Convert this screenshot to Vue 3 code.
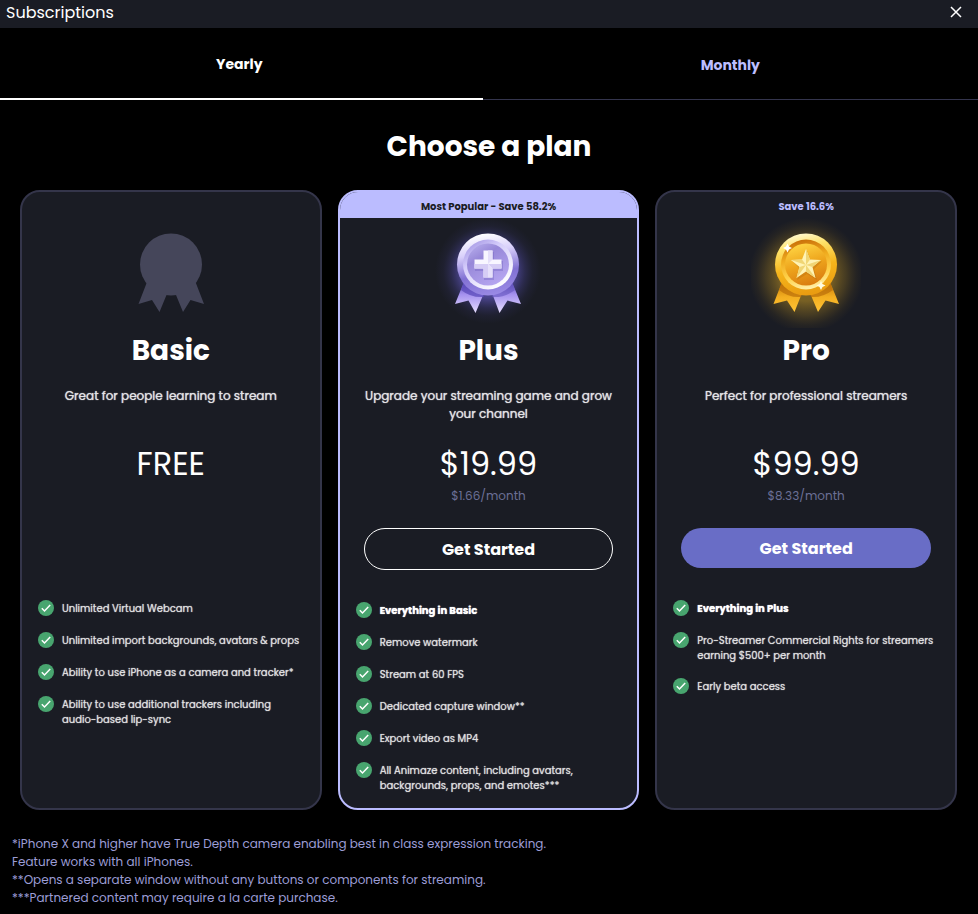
<script setup>
import { ref } from "vue";

const billing = ref("yearly");
const tabs = [
  { id: "yearly", label: "Yearly" },
  { id: "monthly", label: "Monthly" }
];

const plans = [
  {
    id: "basic",
    name: "Basic",
    banner: "",
    text: "Great for people learning to stream",
    price: "FREE",
    monthly: "",
    features: [
      { text: "Unlimited Virtual Webcam" },
      { text: "Unlimited import backgrounds, avatars & props" },
      { text: "Ability to use iPhone as a camera and tracker*" },
      { text: "Ability to use additional trackers including audio-based lip-sync" }
    ]
  },
  {
    id: "plus",
    name: "Plus",
    banner: "Most Popular - Save 58.2%",
    text: "Upgrade your streaming game and grow your channel",
    price: "$19.99",
    monthly: "$1.66/month",
    features: [
      { text: "Everything in Basic", strong: true },
      { text: "Remove watermark" },
      { text: "Stream at 60 FPS" },
      { text: "Dedicated capture window**" },
      { text: "Export video as MP4" },
      { text: "All Animaze content, including avatars, backgrounds, props, and emotes***" }
    ]
  },
  {
    id: "pro",
    name: "Pro",
    banner: "Save 16.6%",
    text: "Perfect for professional streamers",
    price: "$99.99",
    monthly: "$8.33/month",
    features: [
      { text: "Everything in Plus", strong: true },
      { text: "Pro-Streamer Commercial Rights for streamers earning $500+ per month" },
      { text: "Early beta access" }
    ]
  }
];

const notes = [
  "*iPhone X and higher have True Depth camera enabling best in class expression tracking.",
  "Feature works with all iPhones.",
  "**Opens a separate window without any buttons or components for streaming.",
  "***Partnered content may require a la carte purchase."
];
</script>

<template>
  <div class="page">
    <header class="titlebar">
      <span>Subscriptions</span>
      <button class="close" type="button" aria-label="Close">
        <svg width="12" height="12" viewBox="0 0 12 12" aria-hidden="true">
          <path d="M1 1L11 11M11 1L1 11" stroke="#fff" stroke-width="1.5" />
        </svg>
      </button>
    </header>

    <nav class="tabs" role="tablist">
      <button
        v-for="t in tabs"
        :key="t.id"
        type="button"
        role="tab"
        class="tab"
        :class="{ active: billing === t.id }"
        :aria-selected="billing === t.id"
        @click="billing = t.id"
      >{{ t.label }}</button>
    </nav>

    <main>
      <h1 class="heading">Choose a plan</h1>

      <div class="plans">
        <section v-for="p in plans" :key="p.id" class="card" :class="p.id">
          <div class="banner">{{ p.banner }}</div>

          <!-- Medals -->
          <svg v-if="p.id === 'basic'" class="medal" viewBox="0 0 110 110" aria-hidden="true">
            <g fill="#45465a">
              <circle cx="55" cy="46.500" r="31" />
              <path d="M31 64L22.5 86L36 82L43.5 94L50.5 77H60L67 94L74.500 82L88 86L79.500 64Z" />
            </g>
          </svg>

          <svg v-else-if="p.id === 'plus'" class="medal" viewBox="0 0 110 110" aria-hidden="true">
            <defs>
              <radialGradient id="plus-glow" cx="0.5" cy="0.48" r="0.48">
                <stop offset="0.5" stop-color="#6a5fd0" stop-opacity="0.62" />
                <stop offset="0.7" stop-color="#5850b8" stop-opacity="0.28" />
                <stop offset="0.85" stop-color="#4a459a" stop-opacity="0.1" />
                <stop offset="1" stop-color="#4a459a" stop-opacity="0" />
              </radialGradient>
              <linearGradient id="plus-rim" x1="0.4" y1="0" x2="0.6" y2="1">
                <stop offset="0" stop-color="#fff" />
                <stop offset="0.3" stop-color="#d9d0fb" />
                <stop offset="0.65" stop-color="#8171d3" />
                <stop offset="1" stop-color="#9b8be6" />
              </linearGradient>
              <linearGradient id="plus-ring" x1="0" y1="0" x2="0.7" y2="1">
                <stop offset="0" stop-color="#9889df" />
                <stop offset="0.4" stop-color="#d4ccfa" />
                <stop offset="1" stop-color="#fff" />
              </linearGradient>
              <linearGradient id="plus-face" x1="0.2" y1="0" x2="0.8" y2="1">
                <stop offset="0" stop-color="#b5abeb" />
                <stop offset="0.3" stop-color="#9788d8" />
                <stop offset="1" stop-color="#b8a8f3" />
              </linearGradient>
              <linearGradient id="plus-ribbon" x1="0" y1="0" x2="0" y2="1">
                <stop offset="0" stop-color="#594bb9" />
                <stop offset="0.4" stop-color="#a591ef" />
                <stop offset="1" stop-color="#e7dfff" />
              </linearGradient>
            </defs>
            <rect width="110" height="110" fill="url(#plus-glow)" />
            <path d="M31 64L22 86L35.500 82.500L42.500 95L51 75Z" fill="url(#plus-ribbon)" />
            <path d="M79 64L88 86L74.500 82.500L66.500 95L59 75Z" fill="url(#plus-ribbon)" />
            <path d="M31 64L28 72Q38 80 51 79L52 74Z" fill="#5546b6" opacity="0.7" />
            <path d="M79 64L82 72Q71 80 59 79L58 74Z" fill="#6253bc" opacity="0.6" />
            <circle cx="55" cy="46.500" r="31" fill="url(#plus-rim)" />
            <circle cx="55" cy="46.500" r="25" fill="url(#plus-ring)" />
            <circle cx="55" cy="46.500" r="21" fill="url(#plus-face)" />
            <path d="M51 34h10v9h9v10h-9v9H51v-9h-9V43h9z" fill="#6b5cba" opacity="0.35" />
            <path d="M50.500 32.500h9v9h9v9h-9v9h-9v-9h-9v-9h9z" fill="#f8f6ff" />
            <path d="M41.500 50.500V46H55V59.500H50.500V50.500zM59.500 50.500H68.500V46H55z" fill="#d6cdf5" />
            <path d="M55 46L59.500 50.500V59.500H55zM55 32.500H59.500V41.500L55 46z" fill="#e6e0fa" />
          </svg>

          <svg v-else class="medal" viewBox="0 0 110 110" aria-hidden="true">
            <defs>
              <radialGradient id="pro-glow" cx="0.5" cy="0.52" r="0.52">
                <stop offset="0.45" stop-color="#a07d24" stop-opacity="0.7" />
                <stop offset="0.7" stop-color="#806520" stop-opacity="0.42" />
                <stop offset="0.88" stop-color="#6b541c" stop-opacity="0.14" />
                <stop offset="1" stop-color="#6b541c" stop-opacity="0" />
              </radialGradient>
              <linearGradient id="pro-rim" x1="0.4" y1="0" x2="0.6" y2="1">
                <stop offset="0" stop-color="#fff8ce" />
                <stop offset="0.2" stop-color="#ffe36b" />
                <stop offset="0.55" stop-color="#f5b51b" />
                <stop offset="1" stop-color="#e99a10" />
              </linearGradient>
              <linearGradient id="pro-ring" x1="0.4" y1="0" x2="0.6" y2="1">
                <stop offset="0" stop-color="#c96f09" />
                <stop offset="0.35" stop-color="#efab1e" />
                <stop offset="0.7" stop-color="#ffd34c" />
                <stop offset="1" stop-color="#fff0ae" />
              </linearGradient>
              <linearGradient id="pro-face" x1="0.3" y1="0" x2="0.6" y2="1">
                <stop offset="0" stop-color="#ffd544" />
                <stop offset="0.5" stop-color="#eea51c" />
                <stop offset="1" stop-color="#d97c10" />
              </linearGradient>
              <linearGradient id="pro-ribbon" x1="0" y1="0" x2="0" y2="1">
                <stop offset="0" stop-color="#c47808" />
                <stop offset="0.5" stop-color="#f3ae20" />
                <stop offset="1" stop-color="#ffc436" />
              </linearGradient>
            </defs>
            <rect width="110" height="110" fill="url(#pro-glow)" />
            <path d="M31 64L22.500 86L36 82.500L43.500 94L51 75Z" fill="url(#pro-ribbon)" />
            <path d="M79 64L88 86L74.500 82.500L67 94L59 75Z" fill="url(#pro-ribbon)" />
            <path d="M31 64L28 72Q38 80 50 79L52 74Z" fill="#b76a08" opacity="0.65" />
            <path d="M79 64L82 72Q71 80 60 79L58 74Z" fill="#b76a08" opacity="0.65" />
            <circle cx="55" cy="46.500" r="31" fill="url(#pro-rim)" />
            <circle cx="55" cy="46.500" r="25" fill="url(#pro-ring)" />
            <circle cx="55" cy="46.500" r="21" fill="url(#pro-face)" />
            <path d="M56 33L60 43L71 43.500L63 51L66 62L56 56L46 62L49 51L42 43.500L52 43Z" fill="#b96d10" opacity="0.4" />
            <path d="M55 31L59 41.500L70 42L61.500 49L64.500 60L55 53.500L45.500 60L48.500 49L40 42L51 41.500Z" fill="#fff3b4" />
            <path d="M55 47L55 31L59 41.500ZM55 47L70 42L61.500 49ZM55 47L64.500 60L55 53.500ZM55 47L45.500 60L48.500 49ZM55 47L40 42L51 41.500Z" fill="#f0d574" />
            <path d="M36.500 25.500L38 28.500L41 30L38 31.500L36.500 34.500L35 31.500L32 30L35 28.500Z" fill="#fff" />
            <path d="M70 63L71.500 66L74.500 67.500L71.500 69L70 72L68.500 69L65.500 67.500L68.500 66Z" fill="#fffbe0" />
          </svg>

          <h2 class="name">{{ p.name }}</h2>
          <p class="text">{{ p.text }}</p>
          <div class="price">{{ p.price }}</div>
          <div class="per-month">{{ p.monthly }}</div>
          <div class="action">
            <button v-if="p.id !== 'basic'" class="start" type="button">Get Started</button>
          </div>

          <ul class="features">
            <li v-for="f in p.features" :key="f.text" :class="{ strong: f.strong }">
              <svg class="check" width="16" height="16" viewBox="0 0 16 16" aria-hidden="true">
                <circle cx="8" cy="8" r="8" fill="#48a56f" />
                <path d="M3.800 8.300L6.500 11L12.200 5" fill="none" stroke="#fff" stroke-width="1.5" />
              </svg>
              <span>{{ f.text }}</span>
            </li>
          </ul>
        </section>
      </div>

      <footer class="notes">
        <p v-for="n in notes" :key="n">{{ n }}</p>
      </footer>
    </main>
  </div>
</template>

<style>
body {
  margin: 0;
  background: #000;
}
</style>

<style scoped>
.page {
  font-family: Poppins, Inter, "Open Sans", sans-serif;
  color: #fff;
  min-height: 100vh;
  background: #000;
}
button {
  font-family: inherit;
  cursor: pointer;
}

/* Title bar */
.titlebar {
  display: flex;
  align-items: flex-start;
  justify-content: space-between;
  height: 28px;
  padding: 0 16px 0 6px;
  background: #1a1c24;
  font-size: 16px;
  line-height: 26px;
}
.close {
  display: flex;
  margin-top: 6px;
  padding: 0;
  border: 0;
  background: none;
}

/* Tabs */
.tabs {
  display: flex;
}
.tab {
  flex: 1 1 auto;
  height: 72px;
  padding: 4px 2px 0;
  border: 0;
  border-bottom: 1px solid #34354d;
  background: none;
  color: #bcbdff;
  font-size: 14px;
  font-weight: 700;
}
.tab.active {
  padding: 2px 4px 0 0;
  border-bottom: 2px solid #fff;
  color: #fff;
}

.heading {
  margin: 27px 0 23px;
  font-size: 28px;
  line-height: 40px;
  font-weight: 700;
  text-align: center;
}

/* Plan cards */
.plans {
  display: grid;
  grid-template-columns: repeat(3, 1fr);
  gap: 16px;
  padding: 0 21px 0 20px;
}
.card {
  display: flex;
  flex-direction: column;
  align-items: center;
  border: 2px solid #34354a;
  border-radius: 20px;
  background: #1a1c24;
  padding-bottom: 16px;
  overflow: hidden;
}
.card.plus { border-color: #bbbcff; }

.banner {
  align-self: stretch;
  height: 26px;
  color: #bbbcff;
  font-size: 10px;
  font-weight: 700;
  line-height: 30px;
  text-align: center;
}
.plus .banner {
  background: #bbbcff;
  color: #1a1c24;
}

.medal {
  width: 110px;
  height: 110px;
}

.name {
  margin: 0;
  font-size: 28px;
  line-height: 46px;
  font-weight: 700;
}
.text {
  box-sizing: border-box;
  min-height: 36px;
  margin: 13px 0 0;
  padding: 0 20px;
  color: #e3e3e6;
  font-size: 12px;
  font-weight: 400;
  line-height: 18px;
  text-align: center;
  text-shadow: 0 0 1px currentColor;
}
.price {
  margin-top: 17px;
  font-size: 32px;
  line-height: 48px;
}
.per-month {
  height: 16px;
  color: #6b6f96;
  font-size: 12px;
  line-height: 16px;
}
.action {
  box-sizing: border-box;
  align-self: stretch;
  min-height: 40px;
  margin-top: 24px;
  padding: 0 24px;
}
.start {
  display: block;
  width: 100%;
  height: 40px;
  border: 0;
  border-radius: 21px;
  background: #696dc6;
  color: #fff;
  font-size: 16px;
  font-weight: 700;
}
.plus .start {
  height: 42px;
  border: 1px solid #fff;
  background: none;
}

.features {
  box-sizing: border-box;
  align-self: stretch;
  display: flex;
  flex-direction: column;
  gap: 16px;
  margin: 32px 0 0;
  padding: 0 16px;
  list-style: none;
  color: #dededf;
  font-size: 10px;
  font-weight: 400;
  line-height: 15px;
  text-shadow: 0 0 1px currentColor;
}
.features li {
  display: flex;
  align-items: flex-start;
  gap: 8px;
}
.features span { margin: 1px 0 -1px; }
.features .strong {
  color: #fff;
  font-weight: 700;
}
.check { flex-shrink: 0; }

/* Footnotes */
.notes {
  padding: 25px 12px 7px;
  color: #9c9dd6;
  font-size: 12px;
  line-height: 18px;
}
.notes p { margin: 0; }
</style>
